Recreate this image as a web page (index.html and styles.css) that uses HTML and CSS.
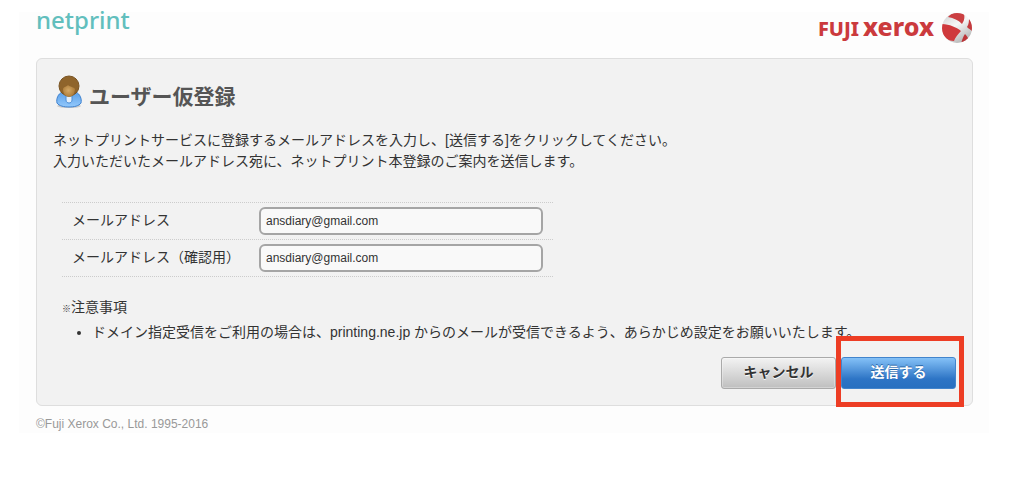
FILE: index.html
```
<!DOCTYPE html>
<html lang="ja">
<head>
    <meta charset="UTF-8">
    <meta name="viewport" content="width=device-width, initial-scale=1.0">
    <title>ユーザー仮登録 | netprint</title>
    <link rel="stylesheet" href="styles.css">
</head>
<body>
    <div class="page">
        <!-- Header -->
        <header class="header">
            <div class="logo">netprint</div>
            <div class="brand">
                <span class="brand-fuji">FUJI</span>
                <span class="brand-xerox">xerox</span>
                <svg class="brand-ball" viewBox="0 0 32 32" aria-hidden="true">
                    <defs>
                        <linearGradient id="ballBand" x1="0" y1="0" x2="0.6" y2="1">
                            <stop offset="0" stop-color="#c9c9c9"/>
                            <stop offset="0.5" stop-color="#f7f7f7"/>
                            <stop offset="1" stop-color="#b5b5b5"/>
                        </linearGradient>
                        <clipPath id="ballClip"><circle cx="16" cy="16" r="15"/></clipPath>
                    </defs>
                    <g clip-path="url(#ballClip)">
                        <rect width="32" height="32" fill="url(#ballBand)"/>
                        <path d="M7 5C11 0 19 -1 23 2C24 6 23 9 21 12C17 8 13 6 7 5Z" fill="#cb3f42"/>
                        <path d="M0 12C8 12 15 15 20 19C17 22 14 26 13 29C5 29 -1 22 0 12Z" fill="#cf393c"/>
                        <path d="M28 5C32 9 33 15 32 20C30 18 28 17 26 15C28 12 28 9 28 5Z" fill="#c53a3d"/>
                        <path d="M24 22C26 24 27 26 28 28L20 32C21 28 22 25 24 22Z" fill="#bd3538"/>
                    </g>
                </svg>
            </div>
        </header>

        <!-- Registration form -->
        <form class="panel">
            <div class="title">
                <svg class="user-icon" viewBox="0 0 28 34" aria-hidden="true">
                    <defs>
                        <linearGradient id="shirt" x1="0" y1="0" x2="0" y2="1">
                            <stop offset="0" stop-color="#5b9fe8"/>
                            <stop offset="1" stop-color="#93c9fc"/>
                        </linearGradient>
                        <radialGradient id="face" cx="45%" cy="45%" r="60%">
                            <stop offset="0" stop-color="#d3a866"/>
                            <stop offset="1" stop-color="#a97734"/>
                        </radialGradient>
                    </defs>
                    <ellipse cx="14" cy="31" rx="12" ry="2" fill="#ccc"/>
                    <path d="M7 17C3 19 1 24 2 28C4 31 9 32 14 32C19 32 24 31 26 28C27 24 25 19 21 17Z" fill="url(#shirt)" stroke="#3f82cf"/>
                    <path d="M11 21V25C11 29 17 29 17 25V21Z" fill="#e4effa" stroke="#4a8dd6"/>
                    <circle cx="14" cy="11" r="10" fill="#8f642b" stroke="#7a5423"/>
                    <path d="M8 14C9 11 12 12 13 10C15 12 19 12 20 14C20 19 17 22 14 22C11 22 8 19 8 14Z" fill="url(#face)"/>
                </svg>
                <h1>ユーザー仮登録</h1>
            </div>

            <p class="lead">
                ネットプリントサービスに登録するメールアドレスを入力し、[送信する]をクリックしてください。<br>
                入力いただいたメールアドレス宛に、ネットプリント本登録のご案内を送信します。
            </p>

            <div class="fields">
                <div class="field">
                    <label for="mail">メールアドレス</label>
                    <input type="email" id="mail" name="mail" value="ansdiary@gmail.com">
                </div>
                <div class="field">
                    <label for="mailConfirm">メールアドレス（確認用）</label>
                    <input type="email" id="mailConfirm" name="mailConfirm" value="ansdiary@gmail.com">
                </div>
            </div>

            <div class="notes">
                <p><span class="mark">※</span>注意事項</p>
                <ul>
                    <li>ドメイン指定受信をご利用の場合は、printing.ne.jp からのメールが受信できるよう、あらかじめ設定をお願いいたします。</li>
                </ul>
            </div>

            <div class="actions">
                <button type="button" class="btn">キャンセル</button>
                <div class="highlight">
                    <button type="submit" class="btn btn-primary">送信する</button>
                </div>
            </div>
        </form>

        <footer class="footer">©Fuji Xerox Co., Ltd. 1995-2016</footer>
    </div>
</body>
</html>
```
FILE: styles.css
```
* {
    box-sizing: border-box;
}

body {
    margin: 0;
    background-color: #fff;
    color: #333;
    font-family: "Liberation Sans", "Noto Sans CJK JP", sans-serif;
    font-size: 14px;
    line-height: 21px;
}

h1,
p,
ul {
    margin: 0;
}

.page {
    margin: 12px 35px 0 19px;
    padding: 0 16px 0 17px;
    background-color: #fdfdfd;
}

.header {
    display: flex;
    justify-content: space-between;
    align-items: flex-start;
    height: 46px;
}

.logo {
    color: #62bfbd;
    font-family: "Noto Sans", sans-serif;
    font-size: 24px;
    font-weight: 500;
    line-height: 16px;
}

.brand {
    display: flex;
    align-items: baseline;
    color: #cb3a3d;
    font-family: "Noto Sans", sans-serif;
    font-weight: 800;
    line-height: 28px;
}

.brand-fuji {
    margin-right: 4px;
    font-size: 20px;
}

.brand-xerox {
    font-size: 25px;
}

.brand-ball {
    align-self: flex-start;
    width: 32px;
    height: 32px;
    margin-left: 7px;
}

.panel {
    padding: 16px 16px 16px 15px;
    background-color: #f2f2f2;
    border: 1px solid #dedede;
    border-radius: 6px;
}

.title {
    display: flex;
    align-items: flex-start;
    gap: 6px;
    padding-left: 3px;
}

.user-icon {
    width: 28px;
    height: 34px;
}

.title h1 {
    padding-top: 7px;
    color: #555;
    font-size: 21px;
    line-height: 30px;
}

.lead {
    margin-top: 18px;
    padding-left: 1px;
}

.fields {
    max-width: 491px;
    margin: 30px 10px 0;
    border-top: 1px dotted #ccc;
}

.field {
    display: flex;
    align-items: center;
    height: 37px;
    padding: 0 10px;
    border-bottom: 1px dotted #ccc;
}

.field label {
    width: 187px;
    padding-bottom: 2px;
}

.field input {
    flex: 1;
    min-width: 0;
    height: 28px;
    padding: 0 5px;
    background-color: #f9f9f9;
    border: 2px solid #a5a5a5;
    border-radius: 6px;
    color: #333;
    font-family: inherit;
    font-size: 12px;
}

.notes {
    margin: 20px 10px 0;
}

.mark {
    font-size: 9px;
    font-weight: bold;
}

.notes ul {
    margin-top: 2px;
    padding-left: 30px;
}

.actions {
    display: flex;
    justify-content: flex-end;
    gap: 5px;
    margin-top: 14px;
}

.btn {
    display: block;
    width: 115px;
    height: 32px;
    padding: 0 0 4px;
    background-image: linear-gradient(#f3f3f3, #bfbfbf);
    border: 1px solid #aaa;
    border-radius: 3px;
    box-shadow: inset 0 0 0 1px rgba(255, 255, 255, 0.3);
    color: #333;
    font-family: inherit;
    font-size: 14px;
    font-weight: bold;
    text-shadow: 0 1px 0 #fff;
    cursor: pointer;
}

.btn-primary {
    background-image: linear-gradient(#84c1f7, #2d74c5 70%, #2870c0);
    border-color: #4284cc;
    box-shadow: none;
    color: #fff;
    text-shadow: 0 -1px 0 #2866a8;
}

.highlight {
    position: relative;
}

/* red frame drawn over the submit button */
.highlight::after {
    content: "";
    position: absolute;
    top: -21px;
    right: -8px;
    bottom: -18px;
    left: -5px;
    border: 5px solid #ed3d24;
    pointer-events: none;
}

.footer {
    padding: 10px 0 0;
    color: #999;
    font-size: 12px;
    line-height: 17px;
}
```
